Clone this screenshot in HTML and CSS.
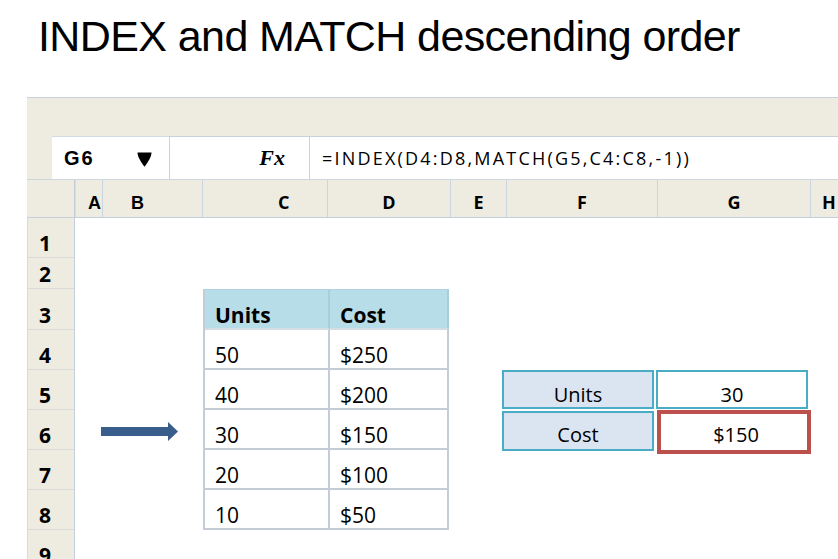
FILE: index.html
```html
<!DOCTYPE html>
<html>
<head>
<meta charset="utf-8">
<link rel="stylesheet" href="styles.css">
</head>
<body>
<div class="title">INDEX and MATCH descending order</div>
<div class="sheet">
  <div class="ribbon"></div>
  <div class="fbar">
    <div class="fbar-gap"></div>
    <div class="namebox">
      <span class="ref">G6</span>
      <svg class="dd" width="15" height="15" viewBox="0 0 15 15"><path d="M0.5 0.5 H14.5 C14.5 5 11 10 7.5 14.8 C4 10 0.5 5 0.5 0.5 Z" fill="#000"/></svg>
    </div>
    <div class="fxbox"><span class="fx">Fx</span></div>
    <div class="formula">=INDEX(D4:D8,MATCH(G5,C4:C8,-1))</div>
  </div>
  <div class="colheads">
    <div class="ch ch-corner"></div>
    <div class="ch ch-a">A</div>
    <div class="ch ch-b">B</div>
    <div class="ch ch-c">C</div>
    <div class="ch">D</div>
    <div class="ch">E</div>
    <div class="ch">F</div>
    <div class="ch">G</div>
    <div class="ch ch-h">H</div>
  </div>
  <div class="sheet-body">
    <div class="rowheads">
      <div class="rh">1</div>
      <div class="rh">2</div>
      <div class="rh">3</div>
      <div class="rh">4</div>
      <div class="rh">5</div>
      <div class="rh">6</div>
      <div class="rh">7</div>
      <div class="rh">8</div>
      <div class="rh">9</div>
    </div>
    <div class="arrow-cell">
      <svg width="77" height="19" viewBox="0 0 77 19"><path d="M0 5 H67 V0 L77 9.5 L67 19 V14 H0 Z" fill="#3a5e8c"/></svg>
    </div>
    <div class="datatable">
      <div class="dt dt-h">Units</div>
      <div class="dt dt-h">Cost</div>
      <div class="dt">50</div><div class="dt">$250</div>
      <div class="dt">40</div><div class="dt">$200</div>
      <div class="dt">30</div><div class="dt">$150</div>
      <div class="dt">20</div><div class="dt">$100</div>
      <div class="dt">10</div><div class="dt">$50</div>
    </div>
    <div class="lookup">
      <div class="lk lk-label">Units</div>
      <div class="lk lk-value">30</div>
      <div class="lk lk-label lk-low">Cost</div>
      <div class="lk lk-result">$150</div>
    </div>
  </div>
</div>
</body>
</html>
```
FILE: styles.css
```css
* { box-sizing: border-box; }
html, body { margin: 0; padding: 0; }
body {
  width: 838px;
  height: 559px;
  overflow: hidden;
  background: #fff;
  font-family: "Open Sans", "Liberation Sans", sans-serif;
  color: #000;
}
.title {
  height: 97px;
  padding: 15px 0 0 38px;
  font-family: "Liberation Sans", Arial, sans-serif;
  font-size: 43px;
  line-height: 43px;
  letter-spacing: -0.6px;
  white-space: nowrap;
}
.sheet {
  margin-left: 27px;
  width: 811px;
}
.ribbon {
  height: 39px;
  background: #eeece1;
  border-top: 1px solid #c9d1da;
}
.fbar {
  display: flex;
  height: 43px;
}
.fbar-gap {
  width: 25px;
  background: #eeece1;
}
.namebox {
  width: 117px;
  background: #fff;
  border-top: 1px solid #d4dae1;
  display: flex;
  align-items: center;
  padding: 0 17px 0 12px;
}
.ref {
  font-family: "Liberation Sans", Arial, sans-serif;
  font-weight: bold;
  font-size: 20px;
  letter-spacing: 2px;
}
.dd { margin-left: auto; margin-top: 2px; }
.fxbox {
  width: 140px;
  background: #fff;
  border-top: 1px solid #c9d1da;
  border-left: 1px solid #c9d1da;
  display: flex;
  align-items: center;
  justify-content: flex-end;
  padding-right: 24px;
}
.fx {
  font-family: "Liberation Serif", serif;
  font-style: italic;
  font-weight: bold;
  font-size: 22px;
}
.formula {
  flex: 1;
  background: #fff;
  border-top: 1px solid #c9d1da;
  border-left: 1px solid #c9d1da;
  display: flex;
  align-items: center;
  padding-left: 12px;
  font-size: 18px;
  letter-spacing: 2.2px;
  white-space: nowrap;
}
.colheads {
  display: grid;
  grid-template-columns: 48px 28px 100px 125px 123px 56px 151px 153px 27px;
  height: 39px;
  background: #eeece1;
  border-top: 1px solid #cfd5dc;
  border-bottom: 1px solid #c5cfdb;
}
.ch {
  display: flex;
  align-items: flex-end;
  justify-content: center;
  padding-bottom: 4px;
  font-weight: bold;
  font-size: 18px;
  line-height: 22px;
  border-right: 1px solid #cbd5e0;
}
.ch-corner { border-right: 1px solid #c5cfdb; }
.ch-a, .ch-b {
  font-family: "Liberation Sans", Arial, sans-serif;
  justify-content: flex-start;
  padding-bottom: 3px;
}
.ch-a { padding-left: 12px; border-left: 1px solid #d6dde5; }
.ch-b { padding-left: 28px; }
.ch-c { justify-content: flex-start; padding-left: 75px; }
.ch-h { justify-content: flex-start; padding-left: 11px; border-right: none; }
.sheet-body {
  display: grid;
  grid-template-columns: 48px 28px 100px 125px 123px 56px 151px 153px 27px;
  grid-template-rows: 40px 31px 41px repeat(6, 40px);
}
.rowheads {
  grid-column: 1;
  grid-row: 1 / -1;
  display: grid;
  grid-template-rows: 40px 31px 41px repeat(6, 40px);
  background: #eeece1;
  border-left: 1px solid #d9d9d9;
  border-right: 1px solid #c3cedb;
}
.rh {
  display: flex;
  align-items: flex-end;
  padding: 0 0 1px 11px;
  font-weight: bold;
  font-size: 21px;
  line-height: 26px;
  border-bottom: 1px solid #dadada;
}
.arrow-cell {
  grid-column: 2 / 4;
  grid-row: 6;
  display: flex;
  align-items: center;
  padding: 2px 0 0 26px;
}
.arrow-cell svg { display: block; }
.datatable {
  grid-column: 4 / 6;
  grid-row: 3 / 9;
  width: 246px;
  display: grid;
  grid-template-columns: 125px 119px;
  grid-template-rows: repeat(6, 40px);
  border-left: 2px solid #c4cdd7;
  border-top: 1px solid #b0d5e0;
}
.dt {
  display: flex;
  align-items: flex-end;
  padding-left: 10px;
  font-size: 21px;
  line-height: 26px;
  border-right: 2px solid #c4cdd7;
  border-bottom: 2px solid #c4cdd7;
}
.dt-h {
  background: #b7dde8;
  font-weight: bold;
  border-right-color: #a7cfdb;
  border-bottom-color: #d5dde4;
}
.lookup {
  grid-column: 7 / 9;
  grid-row: 5 / 7;
  align-self: start;
  justify-self: start;
  margin-left: -5px;
  display: grid;
  grid-template-columns: 152px 152px;
  grid-template-rows: 39px 40px;
  gap: 2px;
}
.lk {
  display: flex;
  align-items: flex-end;
  justify-content: center;
  font-size: 20px;
  line-height: 25px;
  border: 2px solid #4bacc6;
}
.lk-label { background: #dbe5f1; }
.lk-value { background: #fff; }
.lk-low { padding-bottom: 2px; }
.lk-result {
  background: #fff;
  border: 4px solid #bc504d;
  margin: -1px -3px -3px 1px;
  padding: 0 0 3px 4px;
}
```
